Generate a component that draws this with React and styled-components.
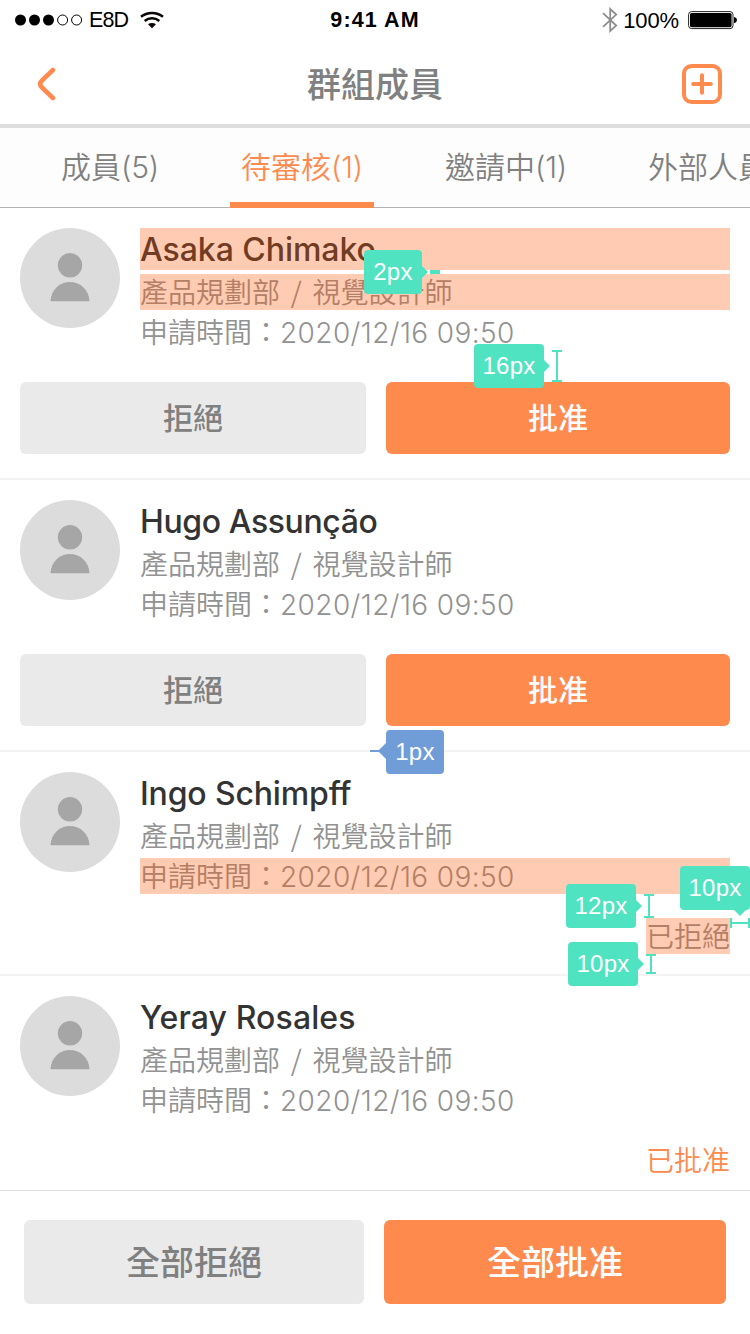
import React from "react";
import styled, { createGlobalStyle, css } from "styled-components";

const ORANGE = "#ff8a4e";
const TEAL = "#50e3c2";
const BLUE = "#709dd8";

const GlobalStyle = createGlobalStyle`
  * { box-sizing: border-box; }
  body {
    margin: 0;
    background: #fff;
    font-family: Inter, "Noto Sans CJK TC", sans-serif;
  }
  button { font-family: inherit; cursor: pointer; }
`;

const Screen = styled.div`
  position: relative;
  display: flex;
  flex-direction: column;
  width: 750px;
  height: 1334px;
  overflow: hidden;
  background: #fff;
`;

const StatusBar = styled.div`
  display: grid;
  flex: none;
  grid-template-columns: 1fr auto 1fr;
  align-items: center;
  height: 40px;
  padding: 0 13px 0 15px;
  color: #000;
  font: 22px/40px "Liberation Sans", sans-serif;
`;

const StatusGroup = styled.div`
  display: flex;
  align-items: center;
  justify-content: ${(p) => (p.$end ? "flex-end" : "flex-start")};
  height: 40px;
  svg { display: block; flex: none; }
`;

const Carrier = styled.span`
  margin: 0 12px 0 6px;
  font-size: 21.5px;
  letter-spacing: -0.9px;
`;

const Clock = styled.span`
  margin-right: 2px;
  font-weight: 700;
  font-size: 21.5px;
  letter-spacing: 1.1px;
`;

const Percent = styled.span`
  margin: 0 9px 0 5px;
  padding-top: 2px;
  letter-spacing: -0.1px;
`;

const NavBar = styled.header`
  display: flex;
  flex: none;
  align-items: center;
  justify-content: space-between;
  height: 88px;
  padding: 4px 28px 0 36px;
  border-bottom: 4px solid #ddd;
`;

const IconButton = styled.button`
  display: flex;
  width: 40px;
  height: 40px;
  padding: 0;
  border: 0;
  background: none;
`;

const Title = styled.h1`
  margin: 2px 8px 0 0;
  color: #808080;
  font-size: 34px;
  line-height: 48px;
  font-weight: 500;
`;

const Tabs = styled.nav`
  display: flex;
  flex: none;
  gap: 60px;
  height: 80px;
  padding-left: 50px;
  border-bottom: 1px solid #b2b2b2;
  background: #fdfdfd;
`;

const Tab = styled.div`
  flex: none;
  width: ${(p) => p.$width}px;
  height: 80px;
  border-bottom: 6px solid ${(p) => (p.$active ? ORANGE : "transparent")};
  color: ${(p) => (p.$active ? ORANGE : "#808080")};
  font-size: 30px;
  font-weight: 350;
  line-height: 79px;
  text-align: center;
  white-space: nowrap;
`;

const Count = styled.span`
  font-weight: 300;
  letter-spacing: -0.3px;
`;

const List = styled.main`
  flex: 1;
`;

const Row = styled.section`
  display: flex;
  flex-direction: column;
  padding: 20px 20px ${(p) => (p.$actions ? 24 : 20)}px;
  border-bottom: 2px solid #f3f3f3;
  &:last-child {
    padding-bottom: 12px;
    border-bottom: 0;
  }
`;

const Person = styled.div`
  display: flex;
  gap: 20px;
`;

const Avatar = styled.div`
  flex: none;
  width: 100px;
  height: 100px;
  border-radius: 50%;
  background: #dcdcdc;
  svg { display: block; }
`;

const Details = styled.div`
  display: flex;
  flex: 1;
  flex-direction: column;
  gap: 4px;
`;

const highlight = css`
  position: relative;
  &::after {
    content: "";
    position: absolute;
    inset: 0;
    background: rgba(255, 84, 0, 0.3);
  }
`;

const Name = styled.h2`
  height: 42px;
  margin: 0;
  color: #333;
  font-size: 32px;
  font-weight: 500;
  line-height: 44px;
  letter-spacing: ${(p) => p.$tracking}px;
  ${(p) => p.$marked && highlight}
`;

const Line = styled.p`
  height: 36px;
  margin: 0;
  color: #929292;
  font-size: 28px;
  font-weight: 350;
  line-height: 38px;
  white-space: nowrap;
  ${(p) => p.$marked && highlight}
`;

const Slash = styled.span`
  display: inline-block;
  width: 32.5px;
  font-family: "Noto Sans CJK TC", sans-serif;
  line-height: 1;
  text-align: center;
`;

const Stamp = styled.span`
  font-weight: 300;
  letter-spacing: 0.4px;
`;

const Actions = styled.div`
  display: grid;
  grid-template-columns: 346px 344px;
  gap: 20px;
  margin-top: 32px;
`;

const Button = styled.button`
  height: ${(p) => (p.$large ? 84 : 72)}px;
  padding: ${(p) => (p.$large ? 2 : 0)}px 0 0;
  border: 0;
  border-radius: 6px;
  background: ${(p) => (p.$primary ? ORANGE : "#eaeaea")};
  color: ${(p) => (p.$primary ? "#fff" : "#808080")};
  font-size: ${(p) => (p.$large ? 34 : 30)}px;
  font-weight: 500;
  line-height: ${(p) => (p.$large ? 82 : 72)}px;
`;

const Result = styled.div`
  align-self: flex-end;
  width: 84px;
  height: 36px;
  margin-top: 24px;
  color: ${(p) => (p.$approved ? ORANGE : "#929292")};
  font-size: 28px;
  font-weight: 350;
  line-height: 38px;
  ${(p) => p.$marked && highlight}
`;

const Footer = styled.footer`
  display: grid;
  flex: none;
  grid-template-columns: 340px 342px;
  gap: 20px;
  height: 144px;
  padding: 29px 24px 30px;
  border-top: 1px solid #ddd;
  background: #fff;
`;

const Badge = styled.div`
  position: absolute;
  left: ${(p) => p.$x}px;
  top: ${(p) => p.$y}px;
  width: ${(p) => p.$w}px;
  height: 44px;
  border-radius: 4px;
  background: ${(p) => p.$color || TEAL};
  color: #fff;
  font: 24px/44px "Liberation Sans", sans-serif;
  letter-spacing: 0.3px;
  text-align: center;
  &::after {
    content: "";
    position: absolute;
    border: 6px solid transparent;
    ${(p) => p.$arrow === "right" && css`left: 100%; top: 16px; border-left-color: ${TEAL};`}
    ${(p) => p.$arrow === "down" && css`right: 4px; top: 100%; border-top-color: ${TEAL};`}
    ${(p) => p.$arrow === "left" && css`right: 100%; top: 13px; border-width: 8px; border-right-color: ${BLUE};`}
  }
`;

const Gauge = styled.div`
  position: absolute;
  left: ${(p) => p.$x}px;
  top: ${(p) => p.$y}px;
  width: ${(p) => p.$w}px;
  height: ${(p) => p.$h}px;
  ${(p) =>
    p.$vertical
      ? css`
          border: solid ${TEAL};
          border-width: 2px 0;
          background: linear-gradient(${TEAL}, ${TEAL}) center / 2px 100% no-repeat;
        `
      : css`
          border: solid ${TEAL};
          border-width: 0 2px;
          background: linear-gradient(${TEAL}, ${TEAL}) center / 100% 2px no-repeat;
        `}
`;

const Tick = styled.div`
  position: absolute;
  left: ${(p) => p.$x}px;
  top: ${(p) => p.$y}px;
  width: ${(p) => p.$w}px;
  height: ${(p) => p.$h}px;
  background: ${(p) => p.$color};
`;

const Signal = () => (
  <svg width="68" height="12" viewBox="0 0 68 12">
    {[5.5, 19.5, 33.5].map((x) => (
      <circle key={x} cx={x} cy="6" r="5.5" />
    ))}
    {[47.6, 61.6].map((x) => (
      <circle key={x} cx={x} cy="6" r="5" fill="none" stroke="#000" />
    ))}
  </svg>
);

const Wifi = () => (
  <svg width="24" height="18" viewBox="0 0 24 18">
    <g fill="none" stroke="#0b0404" strokeWidth="2.5">
      <path d="M1 5.8C7.2.6 16.8.6 23 5.8" />
      <path d="M4.7 10c4.2-3.6 10.4-3.6 14.6 0" />
    </g>
    <path d="M8 13.3c2.3-1.7 5.7-1.7 8 0L12 17.3z" fill="#0b0404" />
  </svg>
);

const Bluetooth = () => (
  <svg width="16" height="26" viewBox="0 0 16 26" fill="none" stroke="#8e8e8e" strokeWidth="1.8">
    <path d="M1 6.2 14.2 18.6 8.2 24V2l6 5.6L1 19.8" />
  </svg>
);

const Battery = () => (
  <svg width="49" height="20" viewBox="0 0 49 20">
    <rect x="0.6" y="1.6" width="44.4" height="17" rx="3" fill="#fff" stroke="#222" strokeWidth="1" />
    <rect x="2" y="3" width="41.6" height="14.2" rx="1.6" />
    <path d="M46 7c3.9.5 3.9 5.7 0 6.2z" />
  </svg>
);

const BackIcon = () => (
  <svg width="40" height="40" viewBox="0 0 40 40" fill="none" stroke={ORANGE} strokeWidth="4.6" strokeLinecap="round">
    <path d="M16.9 6 5.9 16.6Q2.6 20 5.9 23.4L16.9 34" />
  </svg>
);

const AddIcon = () => (
  <svg width="40" height="40" viewBox="0 0 40 40" fill="none" stroke={ORANGE} strokeWidth="4" strokeLinecap="round">
    <rect x="2" y="2" width="36" height="36" rx="7.5" />
    <path d="M20 11.2v17.6M11.2 20h17.6" />
  </svg>
);

const PersonIcon = () => (
  <svg width="100" height="100" viewBox="0 0 100 100" fill="#a6a6a6">
    <circle cx="50" cy="37.3" r="12.2" />
    <path d="M30.5 73.2C31 62 39.4 54 50 54s19 8 19.5 19.2z" />
  </svg>
);

const people = [
  { name: "Asaka Chimako", tracking: -0.05, actions: true, markedName: true, markedRole: true },
  { name: "Hugo Assunção", tracking: -0.4, actions: true },
  { name: "Ingo Schimpff", tracking: -0.15, result: "已拒絕", markedTime: true, markedResult: true },
  { name: "Yeray Rosales", tracking: 0.1, result: "已批准", approved: true },
];

const Member = ({ person }) => (
  <Row $actions={person.actions}>
    <Person>
      <Avatar><PersonIcon /></Avatar>
      <Details>
        <Name $tracking={person.tracking} $marked={person.markedName}>{person.name}</Name>
        <Line $marked={person.markedRole}>產品規劃部<Slash>/</Slash>視覺設計師</Line>
        <Line $marked={person.markedTime}>申請時間：<Stamp>2020/12/16 09:50</Stamp></Line>
      </Details>
    </Person>
    {person.actions ? (
      <Actions>
        <Button>拒絕</Button>
        <Button $primary>批准</Button>
      </Actions>
    ) : (
      <Result $approved={person.approved} $marked={person.markedResult}>
        {person.result}
      </Result>
    )}
  </Row>
);

export default function App() {
  return (
    <>
      <GlobalStyle />
      <Screen>
        <StatusBar>
          <StatusGroup><Signal /><Carrier>E8D</Carrier><Wifi /></StatusGroup>
          <Clock>9:41 AM</Clock>
          <StatusGroup $end><Bluetooth /><Percent>100%</Percent><Battery /></StatusGroup>
        </StatusBar>
        <NavBar>
          <IconButton aria-label="返回"><BackIcon /></IconButton>
          <Title>群組成員</Title>
          <IconButton aria-label="新增"><AddIcon /></IconButton>
        </NavBar>
        <Tabs>
          <Tab $width={120}>成員<Count>(5)</Count></Tab>
          <Tab $width={144} $active>待審核<Count>(1)</Count></Tab>
          <Tab $width={144}>邀請中<Count>(1)</Count></Tab>
          <Tab $width={140}>外部人員</Tab>
        </Tabs>
        <List>
          {people.map((person) => <Member key={person.name} person={person} />)}
        </List>
        <Footer>
          <Button $large>全部拒絕</Button>
          <Button $large $primary>全部批准</Button>
        </Footer>

        <Badge $x={364} $y={250} $w={58} $arrow="right">2px</Badge>
        <Tick $x={430} $y={270} $w={10} $h={4} $color={TEAL} />
        <Badge $x={474} $y={344} $w={70} $arrow="right">16px</Badge>
        <Gauge $vertical $x={552} $y={350} $w={10} $h={32} />
        <Tick $x={370} $y={750} $w={10} $h={2} $color={BLUE} />
        <Badge $x={386} $y={730} $w={58} $color={BLUE} $arrow="left">1px</Badge>
        <Badge $x={566} $y={884} $w={70} $arrow="right">12px</Badge>
        <Gauge $vertical $x={644} $y={894} $w={10} $h={24} />
        <Badge $x={680} $y={866} $w={70} $arrow="down">10px</Badge>
        <Gauge $x={730} $y={918} $w={20} $h={10} />
        <Badge $x={568} $y={942} $w={70} $arrow="right">10px</Badge>
        <Gauge $vertical $x={646} $y={954} $w={10} $h={20} />
      </Screen>
    </>
  );
}
